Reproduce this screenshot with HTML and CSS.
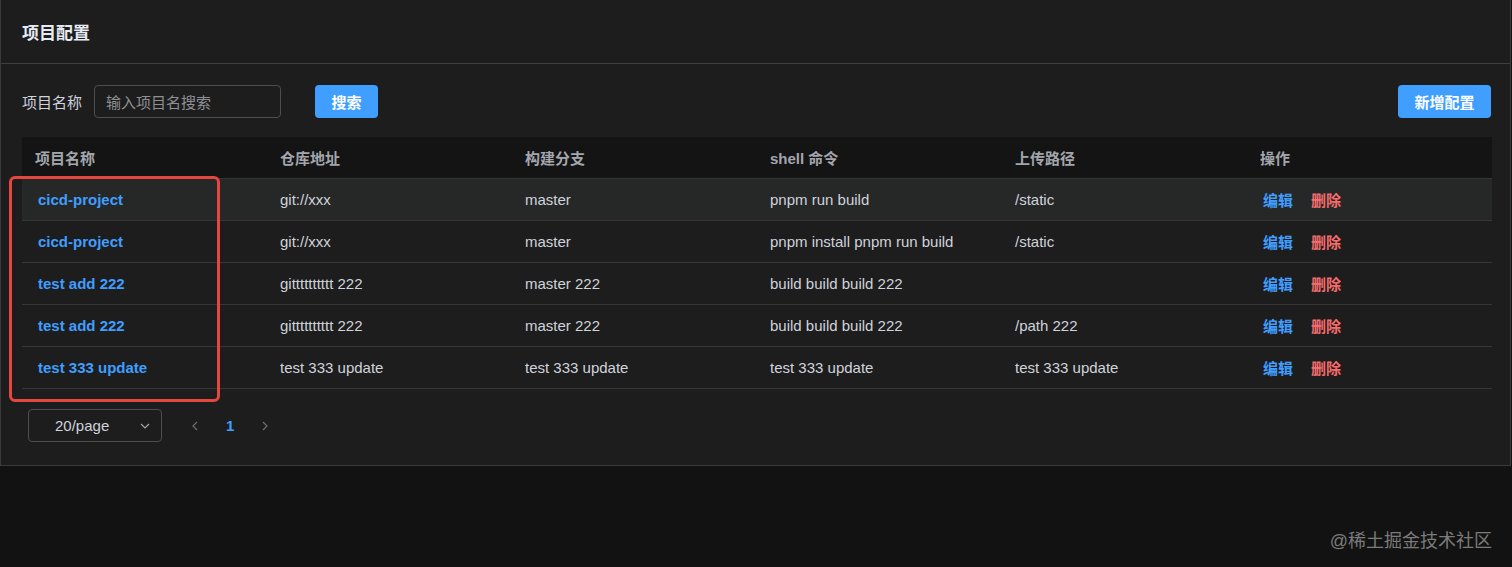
FILE: index.html
```html
<!DOCTYPE html>
<html lang="zh">
<head>
<meta charset="utf-8">
<title>项目配置</title>
<link rel="stylesheet" href="styles.css">
</head>
<body>
<div class="page">
  <div class="card">
    <div class="card-header">项目配置</div>
    <div class="card-body">
      <div class="toolbar">
        <div class="search">
          <label class="form-label">项目名称</label>
          <div class="input"><span class="placeholder">输入项目名搜索</span></div>
          <button class="btn btn-primary btn-search">搜索</button>
        </div>
        <button class="btn btn-primary">新增配置</button>
      </div>
      <div class="table">
        <div class="tr thead">
          <div class="td">项目名称</div>
          <div class="td">仓库地址</div>
          <div class="td">构建分支</div>
          <div class="td">shell 命令</div>
          <div class="td">上传路径</div>
          <div class="td">操作</div>
        </div>
        <div class="tr hover">
          <div class="td"><span class="link">cicd-project</span></div>
          <div class="td">git://xxx</div>
          <div class="td">master</div>
          <div class="td">pnpm run build</div>
          <div class="td">/static</div>
          <div class="td"><span class="act edit">编辑</span><span class="act del">删除</span></div>
        </div>
        <div class="tr">
          <div class="td"><span class="link">cicd-project</span></div>
          <div class="td">git://xxx</div>
          <div class="td">master</div>
          <div class="td">pnpm install pnpm run build</div>
          <div class="td">/static</div>
          <div class="td"><span class="act edit">编辑</span><span class="act del">删除</span></div>
        </div>
        <div class="tr">
          <div class="td"><span class="link">test add 222</span></div>
          <div class="td">gitttttttttt 222</div>
          <div class="td">master 222</div>
          <div class="td">build build build 222</div>
          <div class="td"></div>
          <div class="td"><span class="act edit">编辑</span><span class="act del">删除</span></div>
        </div>
        <div class="tr">
          <div class="td"><span class="link">test add 222</span></div>
          <div class="td">gitttttttttt 222</div>
          <div class="td">master 222</div>
          <div class="td">build build build 222</div>
          <div class="td">/path 222</div>
          <div class="td"><span class="act edit">编辑</span><span class="act del">删除</span></div>
        </div>
        <div class="tr">
          <div class="td"><span class="link">test 333 update</span></div>
          <div class="td">test 333 update</div>
          <div class="td">test 333 update</div>
          <div class="td">test 333 update</div>
          <div class="td">test 333 update</div>
          <div class="td"><span class="act edit">编辑</span><span class="act del">删除</span></div>
        </div>
      </div>
      <div class="pagination">
        <div class="select">
          <span>20/page</span>
          <svg class="chev" width="12" height="12" viewBox="0 0 12 12"><path d="M2 4 L6 8 L10 4" fill="none" stroke="#a3a6ad" stroke-width="1.2"/></svg>
        </div>
        <div class="pager">
          <svg width="10" height="12" viewBox="0 0 10 12"><path d="M7 2 L3 6 L7 10" fill="none" stroke="#6c6e72" stroke-width="1.2"/></svg>
          <span class="num">1</span>
          <svg width="10" height="12" viewBox="0 0 10 12"><path d="M3 2 L7 6 L3 10" fill="none" stroke="#6c6e72" stroke-width="1.2"/></svg>
        </div>
      </div>
    </div>
    <div class="highlight"></div>
  </div>
  <div class="footer">
    <span class="watermark">@稀土掘金技术社区</span>
  </div>
</div>
</body>
</html>
```
FILE: styles.css
```css
* { box-sizing: border-box; }
html, body {
  margin: 0;
  padding: 0;
  background: #121212;
  font-family: "Liberation Sans", "Noto Sans CJK SC", sans-serif;
  font-size: 15px;
  color: #cfd3dc;
}
.page {
  width: 1512px;
  height: 567px;
  display: flex;
  flex-direction: column;
}
.card {
  position: relative;
  width: 1511px;
  background: #1d1d1d;
  border: 1px solid #3a3a3b;
  border-top: none;
}
.card-header {
  height: 64px;
  padding: 0 21px;
  display: flex;
  align-items: center;
  font-size: 17px;
  font-weight: bold;
  color: #e5eaf3;
  border-bottom: 1px solid #3f3f40;
}
.card-body {
  padding: 21px 19px 23px 21px;
}
.toolbar {
  display: flex;
  justify-content: space-between;
  align-items: center;
  height: 33px;
}
.search {
  display: flex;
  align-items: center;
}
.form-label {
  color: #cfd3dc;
  margin-right: 12px;
}
.input {
  width: 187px;
  height: 33px;
  border: 1px solid #4c4d4f;
  border-radius: 4px;
  padding: 0 11px;
  display: flex;
  align-items: center;
  background: #1d1d1d;
}
.placeholder { color: #8d9095; }
.btn {
  height: 33px;
  border: none;
  border-radius: 4px;
  font-family: inherit;
  font-size: 15px;
  font-weight: bold;
  padding: 0 16px;
  color: #fff;
}
.btn-primary { background: #409eff; }
.btn-search { margin-left: 34px; width: 63px; padding: 0; }
.toolbar > .btn { width: 93px; padding: 0; }
.table {
  margin-top: 19px;
  width: 1470px;
}
.tr {
  display: grid;
  grid-template-columns: repeat(6, 245px);
  height: 42px;
  border-bottom: 1px solid #363637;
  align-items: center;
}
.thead {
  background: #141414;
  color: #a3a6ad;
  font-weight: bold;
  border-bottom-color: #363637;
}
.tr.hover { background: #262727; }
.td {
  padding: 0 13px;
  white-space: nowrap;
}
.link {
  color: #409eff;
  font-weight: bold;
  padding-left: 3px;
}
.act {
  font-weight: bold;
  padding-left: 3px;
}
.edit { color: #409eff; margin-right: 15px; }
.del { color: #f56c6c; }
.pagination {
  margin-top: 20px;
  display: flex;
  align-items: center;
  padding-left: 6px;
}
.select {
  width: 134px;
  height: 33px;
  border: 1px solid #4c4d4f;
  border-radius: 4px;
  display: flex;
  align-items: center;
  padding-left: 26px;
  padding-right: 10px;
  justify-content: space-between;
  color: #cfd3dc;
}
.pager {
  margin-left: 28px;
  display: flex;
  align-items: center;
  gap: 26px;
}
.num {
  color: #409eff;
  font-weight: bold;
}
.highlight {
  position: absolute;
  left: 8px;
  top: 176px;
  width: 211px;
  height: 226px;
  border: 3px solid #e5473f;
  border-radius: 6px;
}
.footer {
  flex: 1;
  display: flex;
  justify-content: flex-end;
  align-items: center;
  padding-right: 20px;
  padding-top: 44px;
}
.watermark {
  font-size: 18px;
  color: #7b7b7b;
}
```
